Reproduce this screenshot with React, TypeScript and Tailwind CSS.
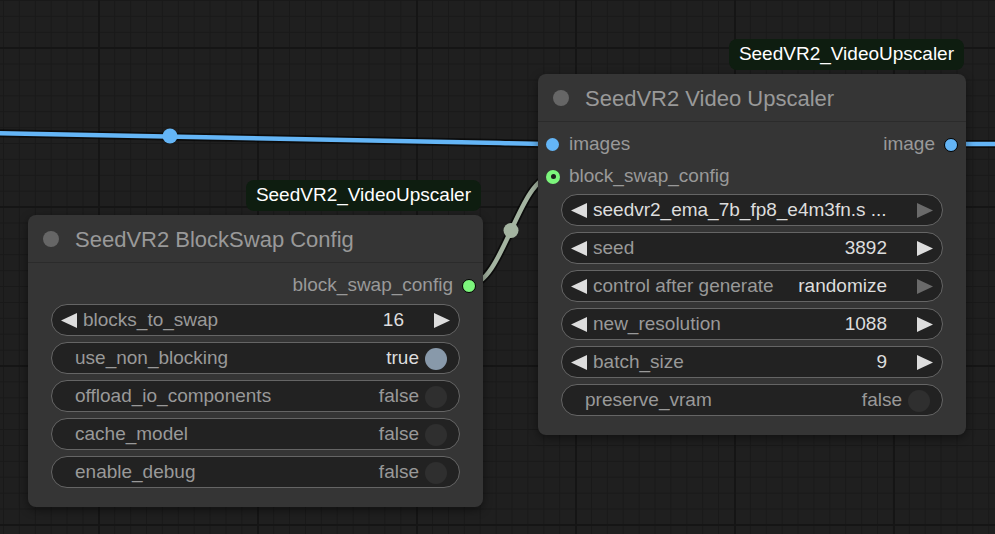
import type { ReactNode } from 'react';

function ArrowLeft({ dim = false }: { dim?: boolean }) {
  return (
    <svg width="16" height="15" viewBox="0 0 16 15" className="shrink-0">
      <polygon points="0,7.5 16,0 16,15" fill={dim ? '#6a6a6a' : '#dddddd'} />
    </svg>
  );
}

function ArrowRight({ dim = false }: { dim?: boolean }) {
  return (
    <svg width="16" height="15" viewBox="0 0 16 15" className="shrink-0">
      <polygon points="16,7.5 0,0 0,15" fill={dim ? '#6a6a6a' : '#dddddd'} />
    </svg>
  );
}

function NumberWidget({
  label,
  value,
  dimRight = false,
}: {
  label?: string;
  value: string;
  dimRight?: boolean;
}) {
  return (
    <div className="flex h-[32px] items-center rounded-full border border-[#656565] bg-[#222222] px-[9px] pt-[1px]">
      <ArrowLeft />
      {label ? (
        <>
          <span className="ml-[6px] text-[#999999]">{label}</span>
          <span className="ml-auto mr-[30px] text-[#dddddd]">{value}</span>
        </>
      ) : (
        <span className="ml-[6px] mr-auto text-[#dddddd]">{value}</span>
      )}
      <ArrowRight dim={dimRight} />
    </div>
  );
}

function ToggleWidget({ label, on }: { label: string; on: boolean }) {
  return (
    <div className="flex h-[32px] items-center rounded-full border border-[#656565] bg-[#222222] pl-[23px] pr-[12px] pt-[1px]">
      <span className="text-[#999999]">{label}</span>
      <span className={`ml-auto mr-[6px] ${on ? 'text-[#dddddd]' : 'text-[#999999]'}`}>
        {on ? 'true' : 'false'}
      </span>
      <span
        className={`h-[22px] w-[22px] shrink-0 rounded-full ${on ? 'bg-[#8899aa]' : 'bg-[#2f2f2f]'}`}
      />
    </div>
  );
}

function Node({
  title,
  badge,
  className,
  children,
}: {
  title: string;
  badge: string;
  className: string;
  children: ReactNode;
}) {
  return (
    <div
      className={`absolute rounded-[8px] bg-[#353535] shadow-[0_3px_10px_rgba(0,0,0,0.45)] ${className}`}
    >
      <div className="absolute -top-[35px] right-[2px] flex h-[31px] items-center rounded-[8px] bg-[#0e1d10] px-[10px] text-[19px] text-white">
        {badge}
      </div>
      <div className="flex h-[48px] items-center gap-[16px] border-b border-[#2b2b2b] pl-[15px] pt-[1px]">
        <span className="h-[16px] w-[16px] rounded-full bg-[#666666]" />
        <span className="text-[22px] text-[#999999]">{title}</span>
      </div>
      {children}
    </div>
  );
}

function Wires() {
  return (
    <svg className="absolute inset-0" width="995" height="534" viewBox="0 0 995 534">
      <g fill="none" strokeLinecap="round">
        <path d="M-10 133 L500 143 C520 143.6 540 144 553 144" stroke="#000" strokeOpacity="0.6" strokeWidth="8" />
        <path d="M-10 133 L500 143 C520 143.6 540 144 553 144" stroke="#64b5f6" strokeWidth="4.5" />
        <path d="M951 144 L1010 144" stroke="#000" strokeOpacity="0.6" strokeWidth="8" />
        <path d="M951 144 L1010 144" stroke="#64b5f6" strokeWidth="4.5" />
        <path d="M469 285 C503 285 519 176 553 176" stroke="#000" strokeOpacity="0.6" strokeWidth="8" />
        <path d="M469 285 C503 285 519 176 553 176" stroke="#a4b4a1" strokeWidth="4.5" />
      </g>
      <circle cx="170" cy="136" r="7.5" fill="#64b5f6" />
      <circle cx="511" cy="230.5" r="7.5" fill="#a4b4a1" />
    </svg>
  );
}

export default function App() {
  return (
    <div className="relative h-[534px] w-[995px] overflow-hidden bg-[#1f1f1f] bg-[linear-gradient(90deg,#151515_2px,transparent_2px),linear-gradient(#151515_2px,transparent_2px),linear-gradient(90deg,#191919_1px,transparent_1px),linear-gradient(#191919_1px,transparent_1px)] bg-[size:159px_159px,159px_159px,15.9px_15.9px,15.9px_15.9px] bg-[position:98px_47px,98px_47px,3px_0px,3px_0px] font-['Liberation_Sans',Arial,sans-serif] text-[19px]">
      <Wires />

      <Node
        title="SeedVR2 BlockSwap Config"
        badge="SeedVR2_VideoUpscaler"
        className="left-[28px] top-[215px] w-[455px]"
      >
        <div className="pt-[6px]">
          <div className="flex h-[32px] items-center justify-end gap-[9px] pr-[7px] pt-[1px]">
            <span className="text-[#999999]">block_swap_config</span>
            <span className="h-[14px] w-[14px] rounded-full border border-black bg-[#7cf57c]" />
          </div>
        </div>
        <div className="mt-[3px] flex flex-col gap-[6px] px-[23px] pb-[19px]">
          <NumberWidget label="blocks_to_swap" value="16" />
          <ToggleWidget label="use_non_blocking" on />
          <ToggleWidget label="offload_io_components" on={false} />
          <ToggleWidget label="cache_model" on={false} />
          <ToggleWidget label="enable_debug" on={false} />
        </div>
      </Node>

      <Node
        title="SeedVR2 Video Upscaler"
        badge="SeedVR2_VideoUpscaler"
        className="left-[538px] top-[74px] w-[428px]"
      >
        <div className="flex flex-col pt-[6px]">
          <div className="flex h-[32px] items-center pl-[8px] pr-[8px] pt-[1px]">
            <span className="h-[13px] w-[13px] rounded-full bg-[#64b5f6]" />
            <span className="ml-[10px] text-[#999999]">images</span>
            <span className="ml-auto mr-[9px] text-[#999999]">image</span>
            <span className="h-[14px] w-[14px] rounded-full border border-black bg-[#64b5f6]" />
          </div>
          <div className="flex h-[32px] items-center pl-[8px] pt-[1px]">
            <span className="flex h-[14px] w-[14px] items-center justify-center rounded-full bg-[#7cf57c]">
              <span className="h-[5px] w-[5px] rounded-full bg-[#1e1e1e]" />
            </span>
            <span className="ml-[9px] text-[#999999]">block_swap_config</span>
          </div>
        </div>
        <div className="mt-[2px] flex flex-col gap-[6px] px-[23px] pb-[19px]">
          <NumberWidget value="seedvr2_ema_7b_fp8_e4m3fn.s ..." dimRight />
          <NumberWidget label="seed" value="3892" />
          <NumberWidget label="control after generate" value="randomize" dimRight />
          <NumberWidget label="new_resolution" value="1088" />
          <NumberWidget label="batch_size" value="9" />
          <ToggleWidget label="preserve_vram" on={false} />
        </div>
      </Node>
    </div>
  );
}
